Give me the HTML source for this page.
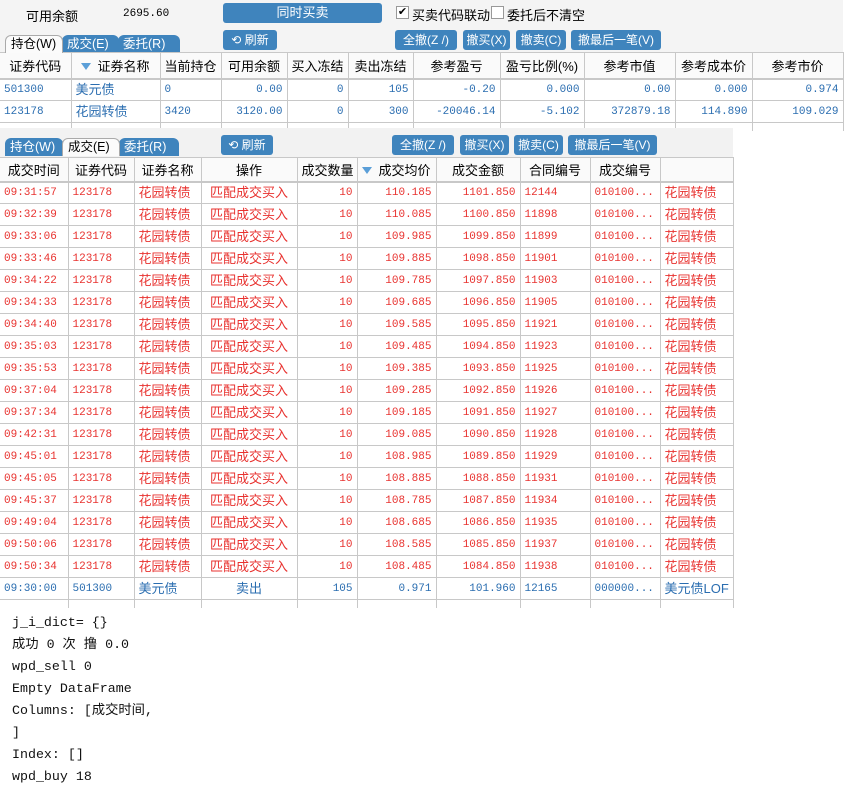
<!DOCTYPE html>
<html><head><meta charset="utf-8"><style>
*{margin:0;padding:0;box-sizing:border-box}
body{width:846px;height:812px;background:#fff;position:relative;overflow:hidden;font-family:"Liberation Sans","Noto Sans CJK SC",sans-serif;font-size:12px;color:#000}
.a{position:absolute}
.btn{position:absolute;background:#3f84bd;color:#fff;border-radius:3px;font-size:12px;text-align:center;line-height:20px;height:20px;white-space:nowrap}
.mono{font-family:"Liberation Mono","Noto Sans CJK SC",monospace}
table{border-collapse:collapse;table-layout:fixed;position:absolute}
td,th{border-right:1px solid #c8c8c8;border-bottom:1px solid #c8c8c8;white-space:nowrap;overflow:hidden;padding:0 4px;font-weight:normal;vertical-align:middle}
th{font-size:13px;text-align:center;background:#fafafa;border-top:1px solid #c8c8c8;border-bottom:2px solid #c8c8c8}
td{font-family:"Liberation Mono",monospace;font-size:11px;line-height:14px}
td.c{font-family:"Liberation Sans","Noto Sans CJK SC",sans-serif;font-size:13px;line-height:16px}
.r{text-align:right}.m{text-align:center}
.t1 td{color:#2a6db0;height:22px;background:#fff}
.t2 td{color:#e8322f;height:22px;background:#fff}
.t2 tr.b td{color:#2a6db0}
.tab{position:absolute;height:18px;line-height:18px;font-size:12.5px;color:#fff;background:#3f84bd;padding:0 5px;border-radius:6px 6px 0 0;white-space:nowrap;overflow:hidden}
.tab.on{background:#fbfbfb;color:#000;border:1px solid #aaa;border-bottom:none;line-height:17px}
.tri{display:inline-block;width:0;height:0;border-left:5px solid transparent;border-right:5px solid transparent;border-top:7px solid #5b9fd8;margin-right:6px;vertical-align:1px}
.chk{position:absolute;width:13px;height:13px;border:1px solid #999;background:#fff;font-size:11px;line-height:11px;text-align:center}
.out{position:absolute;left:12px;font-family:"Liberation Mono","Noto Sans CJK SC",monospace;font-size:13.3px;line-height:22px;color:#111}
.e td{height:8px!important;border-bottom:none;line-height:8px}
</style></head><body>
<div class="a" style="left:0;top:0;width:843px;height:130px;background:#f4f4f4"></div>
<div class="a" style="left:26px;top:6px;font-size:13px">可用余额</div>
<div class="a mono" style="left:123px;top:8px;font-size:11px">2695.60</div>
<div class="btn" style="left:223px;top:3px;width:159px;font-size:13px">同时买卖</div>
<div class="chk" style="left:396px;top:6px">✔</div>
<div class="a" style="left:412px;top:5px;font-size:13px">买卖代码联动</div>
<div class="chk" style="left:491px;top:6px"></div>
<div class="a" style="left:507px;top:5px;font-size:13px">委托后不清空</div>
<div class="tab on" style="left:5px;top:35px;width:58px;z-index:2">持仓(W)</div>
<div class="tab" style="left:62px;top:35px;width:57px">成交(E)</div>
<div class="tab" style="left:118px;top:35px;width:62px">委托(R)</div>
<div class="btn" style="left:223px;top:30px;width:54px">⟲ 刷新</div>
<div class="btn" style="left:395px;top:30px;width:62px">全撤(Z /)</div>
<div class="btn" style="left:463px;top:30px;width:47px">撤买(X)</div>
<div class="btn" style="left:516px;top:30px;width:50px">撤卖(C)</div>
<div class="btn" style="left:571px;top:30px;width:90px">撤最后一笔(V)</div>
<table class="t1" style="left:0;top:52px;width:843px">
<colgroup><col style="width:71px"><col style="width:89px"><col style="width:61px"><col style="width:66px"><col style="width:61px"><col style="width:65px"><col style="width:87px"><col style="width:84px"><col style="width:91px"><col style="width:77px"><col style="width:91px"></colgroup>
<tr style="height:26px"><th>证券代码</th><th><span class="tri"></span>证券名称</th><th>当前持仓</th><th>可用余额</th><th>买入冻结</th><th>卖出冻结</th><th>参考盈亏</th><th>盈亏比例(%)</th><th>参考市值</th><th>参考成本价</th><th>参考市价</th></tr>
<tr><td>501300</td><td class="c">美元债</td><td>0</td><td class="r">0.00</td><td class="r">0</td><td class="r">105</td><td class="r">-0.20</td><td class="r">0.000</td><td class="r">0.00</td><td class="r">0.000</td><td class="r">0.974</td></tr>
<tr><td>123178</td><td class="c">花园转债</td><td>3420</td><td class="r">3120.00</td><td class="r">0</td><td class="r">300</td><td class="r">-20046.14</td><td class="r">-5.102</td><td class="r">372879.18</td><td class="r">114.890</td><td class="r">109.029</td></tr>
<tr class="e"><td></td><td></td><td></td><td></td><td></td><td></td><td></td><td></td><td></td><td></td><td></td></tr>
</table>
<div class="a" style="left:0;top:128px;width:733px;height:480px;background:#f2f2f2"></div>
<div class="tab" style="left:5px;top:138px;width:58px">持仓(W)</div>
<div class="tab on" style="left:62px;top:138px;width:58px;z-index:2">成交(E)</div>
<div class="tab" style="left:119px;top:138px;width:60px">委托(R)</div>
<div class="btn" style="left:221px;top:135px;width:52px">⟲ 刷新</div>
<div class="btn" style="left:392px;top:135px;width:62px">全撤(Z /)</div>
<div class="btn" style="left:460px;top:135px;width:49px">撤买(X)</div>
<div class="btn" style="left:514px;top:135px;width:49px">撤卖(C)</div>
<div class="btn" style="left:568px;top:135px;width:89px">撤最后一笔(V)</div>
<table class="t2" style="left:0;top:157px;width:733px">
<colgroup><col style="width:68px"><col style="width:66px"><col style="width:67px"><col style="width:96px"><col style="width:60px"><col style="width:79px"><col style="width:84px"><col style="width:70px"><col style="width:70px"><col style="width:73px"></colgroup>
<tr style="height:24px"><th>成交时间</th><th>证券代码</th><th>证券名称</th><th>操作</th><th>成交数量</th><th><span class="tri"></span>成交均价</th><th>成交金额</th><th>合同编号</th><th>成交编号</th><th></th></tr>
<tr><td>09:31:57</td><td>123178</td><td class="c">花园转债</td><td class="c m">匹配成交买入</td><td class="r">10</td><td class="r">110.185</td><td class="r">1101.850</td><td>12144</td><td>010100...</td><td class="c">花园转债</td></tr>
<tr><td>09:32:39</td><td>123178</td><td class="c">花园转债</td><td class="c m">匹配成交买入</td><td class="r">10</td><td class="r">110.085</td><td class="r">1100.850</td><td>11898</td><td>010100...</td><td class="c">花园转债</td></tr>
<tr><td>09:33:06</td><td>123178</td><td class="c">花园转债</td><td class="c m">匹配成交买入</td><td class="r">10</td><td class="r">109.985</td><td class="r">1099.850</td><td>11899</td><td>010100...</td><td class="c">花园转债</td></tr>
<tr><td>09:33:46</td><td>123178</td><td class="c">花园转债</td><td class="c m">匹配成交买入</td><td class="r">10</td><td class="r">109.885</td><td class="r">1098.850</td><td>11901</td><td>010100...</td><td class="c">花园转债</td></tr>
<tr><td>09:34:22</td><td>123178</td><td class="c">花园转债</td><td class="c m">匹配成交买入</td><td class="r">10</td><td class="r">109.785</td><td class="r">1097.850</td><td>11903</td><td>010100...</td><td class="c">花园转债</td></tr>
<tr><td>09:34:33</td><td>123178</td><td class="c">花园转债</td><td class="c m">匹配成交买入</td><td class="r">10</td><td class="r">109.685</td><td class="r">1096.850</td><td>11905</td><td>010100...</td><td class="c">花园转债</td></tr>
<tr><td>09:34:40</td><td>123178</td><td class="c">花园转债</td><td class="c m">匹配成交买入</td><td class="r">10</td><td class="r">109.585</td><td class="r">1095.850</td><td>11921</td><td>010100...</td><td class="c">花园转债</td></tr>
<tr><td>09:35:03</td><td>123178</td><td class="c">花园转债</td><td class="c m">匹配成交买入</td><td class="r">10</td><td class="r">109.485</td><td class="r">1094.850</td><td>11923</td><td>010100...</td><td class="c">花园转债</td></tr>
<tr><td>09:35:53</td><td>123178</td><td class="c">花园转债</td><td class="c m">匹配成交买入</td><td class="r">10</td><td class="r">109.385</td><td class="r">1093.850</td><td>11925</td><td>010100...</td><td class="c">花园转债</td></tr>
<tr><td>09:37:04</td><td>123178</td><td class="c">花园转债</td><td class="c m">匹配成交买入</td><td class="r">10</td><td class="r">109.285</td><td class="r">1092.850</td><td>11926</td><td>010100...</td><td class="c">花园转债</td></tr>
<tr><td>09:37:34</td><td>123178</td><td class="c">花园转债</td><td class="c m">匹配成交买入</td><td class="r">10</td><td class="r">109.185</td><td class="r">1091.850</td><td>11927</td><td>010100...</td><td class="c">花园转债</td></tr>
<tr><td>09:42:31</td><td>123178</td><td class="c">花园转债</td><td class="c m">匹配成交买入</td><td class="r">10</td><td class="r">109.085</td><td class="r">1090.850</td><td>11928</td><td>010100...</td><td class="c">花园转债</td></tr>
<tr><td>09:45:01</td><td>123178</td><td class="c">花园转债</td><td class="c m">匹配成交买入</td><td class="r">10</td><td class="r">108.985</td><td class="r">1089.850</td><td>11929</td><td>010100...</td><td class="c">花园转债</td></tr>
<tr><td>09:45:05</td><td>123178</td><td class="c">花园转债</td><td class="c m">匹配成交买入</td><td class="r">10</td><td class="r">108.885</td><td class="r">1088.850</td><td>11931</td><td>010100...</td><td class="c">花园转债</td></tr>
<tr><td>09:45:37</td><td>123178</td><td class="c">花园转债</td><td class="c m">匹配成交买入</td><td class="r">10</td><td class="r">108.785</td><td class="r">1087.850</td><td>11934</td><td>010100...</td><td class="c">花园转债</td></tr>
<tr><td>09:49:04</td><td>123178</td><td class="c">花园转债</td><td class="c m">匹配成交买入</td><td class="r">10</td><td class="r">108.685</td><td class="r">1086.850</td><td>11935</td><td>010100...</td><td class="c">花园转债</td></tr>
<tr><td>09:50:06</td><td>123178</td><td class="c">花园转债</td><td class="c m">匹配成交买入</td><td class="r">10</td><td class="r">108.585</td><td class="r">1085.850</td><td>11937</td><td>010100...</td><td class="c">花园转债</td></tr>
<tr><td>09:50:34</td><td>123178</td><td class="c">花园转债</td><td class="c m">匹配成交买入</td><td class="r">10</td><td class="r">108.485</td><td class="r">1084.850</td><td>11938</td><td>010100...</td><td class="c">花园转债</td></tr>
<tr class="b"><td>09:30:00</td><td>501300</td><td class="c">美元债</td><td class="c m">卖出</td><td class="r">105</td><td class="r">0.971</td><td class="r">101.960</td><td>12165</td><td>000000...</td><td class="c">美元债LOF</td></tr>
<tr class="e"><td></td><td></td><td></td><td></td><td></td><td></td><td></td><td></td><td></td><td></td></tr>
</table>
<div class="out" style="top:612px">j_i_dict= {}<br>成功 0 次 撸 0.0<br>wpd_sell 0<br>Empty DataFrame<br>Columns: [成交时间,<br>]<br>Index: []<br>wpd_buy 18</div>
</body></html>
